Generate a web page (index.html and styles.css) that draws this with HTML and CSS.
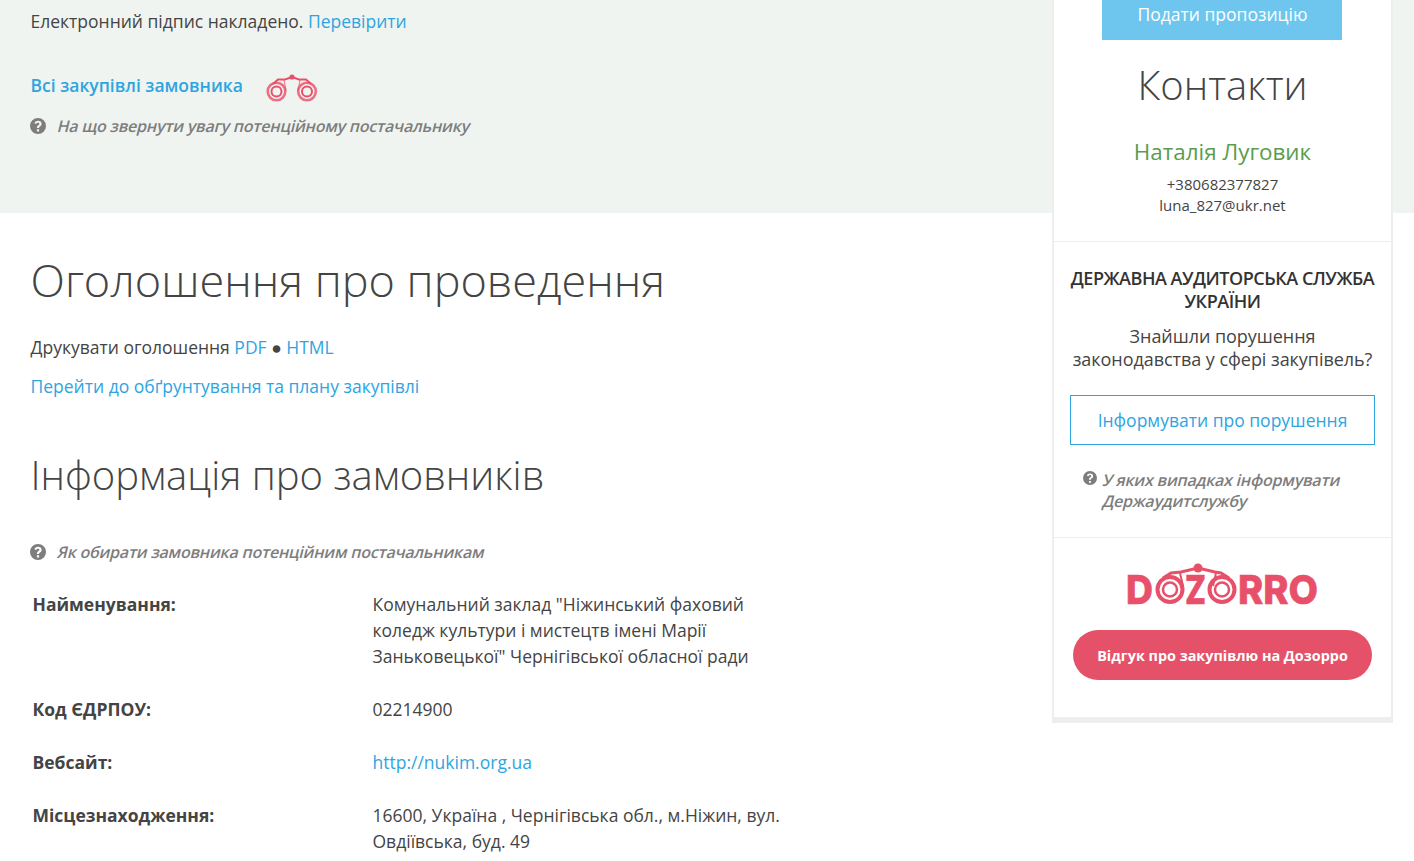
FILE: index.html
```html
<!DOCTYPE html>
<html lang="uk">
<head>
<meta charset="utf-8">
<title>Оголошення про проведення</title>
<link rel="stylesheet" href="styles.css">
</head>
<body>
<div class="page">
  <header class="band">
    <p class="sign">Електронний підпис накладено. <a href="#">Перевірити</a></p>
    <div class="all-row">
      <a class="all-link" href="#">Всі закупівлі замовника</a>
      <svg class="bino" viewBox="0 0 52 28" width="52" height="28" aria-hidden="true">
        <g fill="none" stroke="#e8506a">
          <circle cx="10.500" cy="17.500" r="8.800" stroke-width="2.600" opacity=".8"/>
          <circle cx="10.500" cy="17.500" r="5" stroke-width="2"/>
          <circle cx="41" cy="17.500" r="8.800" stroke-width="2.600" opacity=".8"/>
          <circle cx="41" cy="17.500" r="5" stroke-width="2"/>
          <path d="M7 10 12 5.500 19 5.500 26 3 33 5.500 40 5.500 45 10" stroke-width="2"/>
          <path d="M18 6 20 17M34 6 32 17" stroke-width="1.200" opacity=".7"/>
        </g>
        <circle cx="26" cy="3" r="2.600" fill="#e8506a"/>
      </svg>
    </div>
    <p class="hint"><svg class="q" viewBox="0 0 16 16" width="16" height="16" aria-hidden="true"><use href="#qmark"/></svg><span class="slant">На що звернути увагу потенційному постачальнику</span></p>
  </header>

  <main class="content">
    <h1>Оголошення про проведення</h1>
    <p class="print">Друкувати оголошення <a href="#">PDF</a> ● <a href="#">HTML</a></p>
    <p class="jump"><a href="#">Перейти до обґрунтування та плану закупівлі</a></p>
    <h2>Інформація про замовників</h2>
    <p class="hint hint-buyers"><svg class="q" viewBox="0 0 16 16" width="16" height="16" aria-hidden="true"><use href="#qmark"/></svg><span class="slant">Як обирати замовника потенційним постачальникам</span></p>
    <dl class="facts">
      <dt>Найменування:</dt>
      <dd>Комунальний заклад "Ніжинський фаховий коледж культури і мистецтв імені Марії Заньковецької" Чернігівської обласної ради</dd>
      <dt>Код ЄДРПОУ:</dt>
      <dd>02214900</dd>
      <dt>Вебсайт:</dt>
      <dd><a href="#">http://nukim.org.ua</a></dd>
      <dt>Місцезнаходження:</dt>
      <dd>16600, Україна , Чернігівська обл., м.Ніжин, вул. Овдіївська, буд. 49</dd>
    </dl>
  </main>

  <aside class="side">
    <section class="side-contacts">
      <a class="submit" href="#">Подати пропозицію</a>
      <h3>Контакти</h3>
      <p class="person">Наталія Луговик</p>
      <p class="reach">+380682377827<br>luna_827@ukr.net</p>
    </section>
    <section class="side-audit">
      <h4>ДЕРЖАВНА АУДИТОРСЬКА СЛУЖБА УКРАЇНИ</h4>
      <p class="found">Знайшли порушення законодавства у сфері закупівель?</p>
      <a class="report" href="#">Інформувати про порушення</a>
      <div class="hint hint-side"><svg class="q q-small" viewBox="0 0 16 16" width="14" height="14" aria-hidden="true"><use href="#qmark"/></svg><div><span class="slant">У яких випадках інформувати</span><span class="slant">Держаудитслужбу</span></div></div>
    </section>
    <section class="side-dozorro">
      <svg class="logo" viewBox="0 0 196 46" width="196" height="46" role="img" aria-label="DOZORRO">
        <g class="logo-text">
          <text x="1" y="42" textLength="27" lengthAdjust="spacingAndGlyphs">D</text>
          <text x="60" y="42" textLength="21" lengthAdjust="spacingAndGlyphs">Z</text>
          <text x="113" y="42" textLength="80" lengthAdjust="spacingAndGlyphs">RRO</text>
        </g>
        <g fill="none" stroke="#e8506a">
          <circle cx="45" cy="27.500" r="12.500" stroke-width="4"/>
          <circle cx="45" cy="27.500" r="7" stroke-width="2.500"/>
          <circle cx="97" cy="27.500" r="12.500" stroke-width="4"/>
          <circle cx="97" cy="27.500" r="7" stroke-width="2.500"/>
          <path d="M38 16 46 11 56 10 73 6 90 10 96 11 104 16" stroke-width="3"/>
          <path d="M55 11 58 24M91 11 88 24" stroke-width="2"/>
        </g>
        <circle cx="73" cy="6" r="4.500" fill="#e8506a"/>
      </svg>
      <a class="review" href="#">Відгук про закупівлю на Дозорро</a>
    </section>
  </aside>
</div>
<svg class="defs" width="0" height="0" aria-hidden="true">
  <symbol id="qmark" viewBox="0 0 16 16">
    <path fill="#7d7d7d" fill-rule="evenodd" d="M8 0a8 8 0 1 1 0 16A8 8 0 0 1 8 0ZM6.900 11.300v2.100h2.200v-2.100ZM8.100 2.800c-1.900 0-3.200.9-3.700 2.400l1.800.8c.3-.8.900-1.300 1.800-1.300.8 0 1.400.4 1.400 1.100 0 .6-.4.900-1.100 1.400-.9.600-1.400 1.200-1.400 2.300v.6h2.100v-.4c0-.5.300-.8 1-1.300.9-.6 1.600-1.300 1.600-2.700 0-1.800-1.500-2.900-3.500-2.900Z"/>
  </symbol>
</svg>
</body>
</html>
```
FILE: styles.css
```css
* { box-sizing: border-box; }
html, body { margin: 0; padding: 0; }
body {
  font-family: "Open Sans", "Noto Sans", sans-serif;
  font-size: 17.5px;
  color: #444;
  background: #fff;
  overflow: hidden;
  height: 861px;
}
a { color: #2ea5df; text-decoration: none; }
p { margin: 0; }
.page { position: relative; height: 861px; overflow: hidden; }
.defs { position: absolute; }

.band { background: #f0f4f1; height: 213px; padding: 9px 30.500px 0; }
.sign { line-height: 24px; }
.all-row { display: flex; align-items: flex-start; margin-top: 40px; height: 28px; }
.all-link { font-weight: 600; line-height: 24px; }
.bino { margin-left: 23px; margin-top: 1px; }
.hint { display: flex; align-items: flex-start; color: #7d7d7d; font-weight: 600; font-size: 16px; line-height: 22px; }
.slant { display: block; transform: skewX(-14deg); letter-spacing: -.23px; white-space: nowrap; }
.q { flex: none; margin: 3px 11.500px 0 -.500px; }
.band .hint { margin-top: 14px; }

.content { padding: 0 30.500px; }
h1 { font-weight: 300; font-size: 45px; line-height: 56px; margin: 39px 0 0; color: #444; }
h2 { font-weight: 300; font-size: 40px; line-height: 50px; margin: 52px 0 0; color: #444; }
.print { margin-top: 27px; line-height: 24px; }
.jump { margin-top: 15px; line-height: 24px; }
.hint-buyers { margin-top: 41px; }
.facts { display: grid; grid-template-columns: 340px 420px; margin: 28px 0 0 2px; row-gap: 27px; line-height: 26px; }
.facts dt { font-weight: 700; }
.facts dd { margin: 0; }

.side { position: absolute; top: 0; left: 1052px; width: 341px; height: 723px; background: #fff; border: solid #eee; border-width: 0 2px 6px; text-align: center; }
.side-contacts { height: 242px; border-bottom: 1px solid #eee; }
.submit { display: block; width: 240px; height: 40px; margin: 0 0 0 48px; padding-left: 1px; background: #6ec6ee; color: #fff; line-height: 29px; }
h3 { font-weight: 300; font-size: 40px; line-height: 54px; margin: 18px 0 0; color: #444; }
.person { color: #5b9c50; font-size: 22.400px; line-height: 32px; margin-top: 24px; }
.reach { font-size: 15px; line-height: 21px; margin-top: 6px; }
.side-audit { height: 296px; border-bottom: 1px solid #eee; padding: 25px 16px 0; }
h4 { font-size: 18px; font-weight: 600; line-height: 23px; margin: 0 -6px; color: #333; letter-spacing: -.48px; }
.found { font-size: 18px; letter-spacing: -.05px; line-height: 23px; margin-top: 12px; }
.report { display: block; height: 50px; line-height: 48px; margin-top: 24px; border: 1px solid #2ea5df; }
.hint-side { text-align: left; margin: 25px 0 0 13px; line-height: 21px; }
.q-small { margin: 1px 6px 0 0; }
.side-dozorro { padding-top: 24px; }
.logo { display: block; margin: 0 auto; overflow: visible; }
.logo-text { font-family: Inter, "Open Sans", sans-serif; font-weight: 800; font-size: 40px; fill: #e8506a; stroke: #e8506a; stroke-width: .6px; }
.review { display: block; width: 299px; height: 50px; margin: 22px auto 0; border-radius: 25px; background: #e55168; color: #fff; font-weight: 700; font-size: 14.400px; line-height: 51px; }
```
